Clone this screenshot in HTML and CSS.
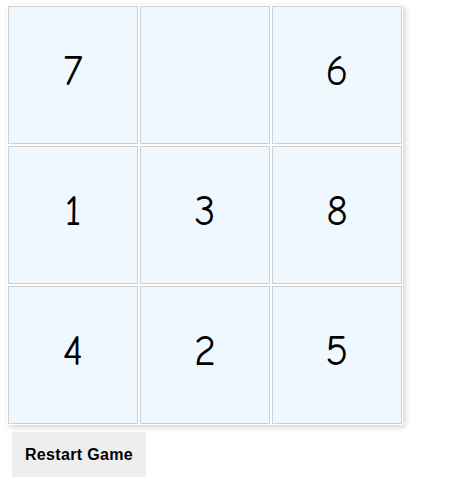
FILE: index.html
```html
<!DOCTYPE html>
<html>
<head>
<meta charset="utf-8">
<link rel="stylesheet" href="styles.css">
</head>
<body>
<div class="board">
  <div class="tile">7</div>
  <div class="tile empty"></div>
  <div class="tile">6</div>
  <div class="tile">1</div>
  <div class="tile">3</div>
  <div class="tile">8</div>
  <div class="tile">4</div>
  <div class="tile">2</div>
  <div class="tile">5</div>
</div>
<button class="restart">Restart Game</button>
</body>
</html>
```
FILE: styles.css
```css
html, body {
  margin: 0;
  padding: 0;
  background: #fff;
}
body {
  padding: 5px 0 0 7px;
}
.board {
  display: inline-grid;
  grid-template-columns: repeat(3, 130px);
  grid-template-rows: repeat(3, 138px);
  gap: 2px;
  padding: 1px;
  background: #fff;
  box-shadow: 2px 2px 6px rgba(0, 0, 0, 0.18);
  vertical-align: top;
}
.tile {
  box-sizing: border-box;
  background: #f0f8ff;
  border: 1px solid #cfcfcf;
  display: flex;
  align-items: center;
  justify-content: center;
  padding-bottom: 8px;
  font-family: "Comic Sans MS", "Comic Neue", "Open Sans", sans-serif;
  font-size: 42px;
  color: #000;
}
.restart {
  display: block;
  margin: 7px 0 0 5px;
  width: 134px;
  height: 45px;
  border: none;
  background: #eeeeee;
  font-family: "Liberation Sans", Arial, sans-serif;
  font-weight: bold;
  font-size: 16px;
  letter-spacing: 0.35px;
  color: #000;
  padding: 0;
}
```
